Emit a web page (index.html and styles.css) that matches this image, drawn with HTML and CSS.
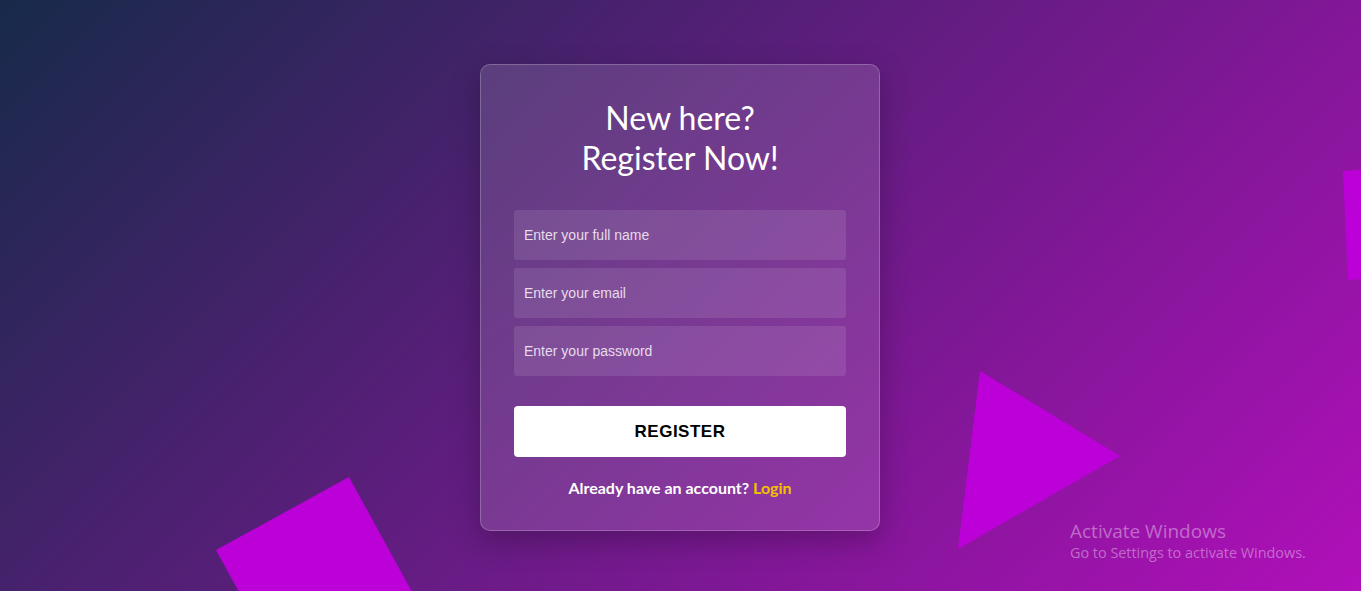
FILE: index.html
```html
<!DOCTYPE html>
<html lang="en">
<head>
<meta charset="utf-8">
<title>Register</title>
<link rel="stylesheet" href="styles.css">
</head>
<body>
<svg class="shapes" width="1361" height="591" viewBox="0 0 1361 591" aria-hidden="true">
  <polygon points="216,550 349,477 422,610 289,683" />
  <polygon points="980,371 1120,456 958,549" />
  <polygon points="1343,171 1390,168 1395,277 1348,280" />
</svg>

<main class="card">
  <h1 class="title">New here?<br>Register Now!</h1>
  <form class="form">
    <div class="fields">
      <input class="field" type="text" placeholder="Enter your full name">
      <input class="field" type="email" placeholder="Enter your email">
      <input class="field" type="password" placeholder="Enter your password">
    </div>
    <button class="btn" type="button">REGISTER</button>
  </form>
  <p class="foot">Already have an account? <a class="link" href="#">Login</a></p>
</main>

<div class="watermark">
  <div class="wm-title">Activate Windows</div>
  <div class="wm-sub">Go to Settings to activate Windows.</div>
</div>
</body>
</html>
```

FILE: styles.css
```css
* { box-sizing: border-box; }

html, body {
  margin: 0;
  padding: 0;
  height: 100%;
}

body {
  min-height: 100vh;
  display: flex;
  align-items: center;
  justify-content: center;
  background: linear-gradient(135deg, #172a4a 0%, #b10fba 100%);
  font-family: "Lato", "Liberation Sans", sans-serif;
  overflow: hidden;
  position: relative;
}

.shapes {
  position: absolute;
  left: 0;
  top: 0;
  fill: #bc00d8;
}

.card {
  position: relative;
  width: 400px;
  height: 467px;
  margin: 4px 1px 0 0;
  padding: 33px 33px 0;
  background: rgba(255, 255, 255, 0.13);
  border: 1px solid rgba(255, 255, 255, 0.22);
  border-radius: 10px;
  box-shadow: 0 10px 30px rgba(0, 0, 0, 0.25);
  display: flex;
  flex-direction: column;
  align-items: stretch;
}

.title {
  margin: 0;
  text-align: center;
  color: #fff;
  font-size: 32px;
  font-weight: 400;
  line-height: 40px;
}

.form {
  margin-top: 32px;
  display: flex;
  flex-direction: column;
}

.fields {
  display: flex;
  flex-direction: column;
  gap: 8px;
}

.field {
  height: 50px;
  width: 100%;
  border: none;
  outline: none;
  border-radius: 3px;
  background: rgba(255, 255, 255, 0.1);
  padding: 0 10px;
  font-family: "Liberation Sans", Arial, sans-serif;
  font-size: 14px;
  color: #fff;
}

.field::placeholder {
  color: #e6dcec;
}

.btn {
  margin-top: 30px;
  height: 51px;
  width: 100%;
  border: none;
  border-radius: 4px;
  background: #fff;
  color: #000;
  font-family: "Liberation Sans", Arial, sans-serif;
  font-weight: 700;
  font-size: 17px;
  letter-spacing: 0.5px;
  cursor: pointer;
}

.foot {
  margin: 21px 0 0;
  text-align: center;
  color: #fff;
  font-size: 16px;
  font-weight: 700;
}

.link {
  color: #f2c200;
  text-decoration: none;
}

.watermark {
  position: absolute;
  left: 1070px;
  top: 519px;
  color: rgba(255, 255, 255, 0.38);
  font-family: "Open Sans", "Noto Sans", sans-serif;
}

.wm-title {
  font-size: 19px;
  line-height: 24px;
}

.wm-sub {
  font-size: 14.4px;
  line-height: 20px;
}
```
